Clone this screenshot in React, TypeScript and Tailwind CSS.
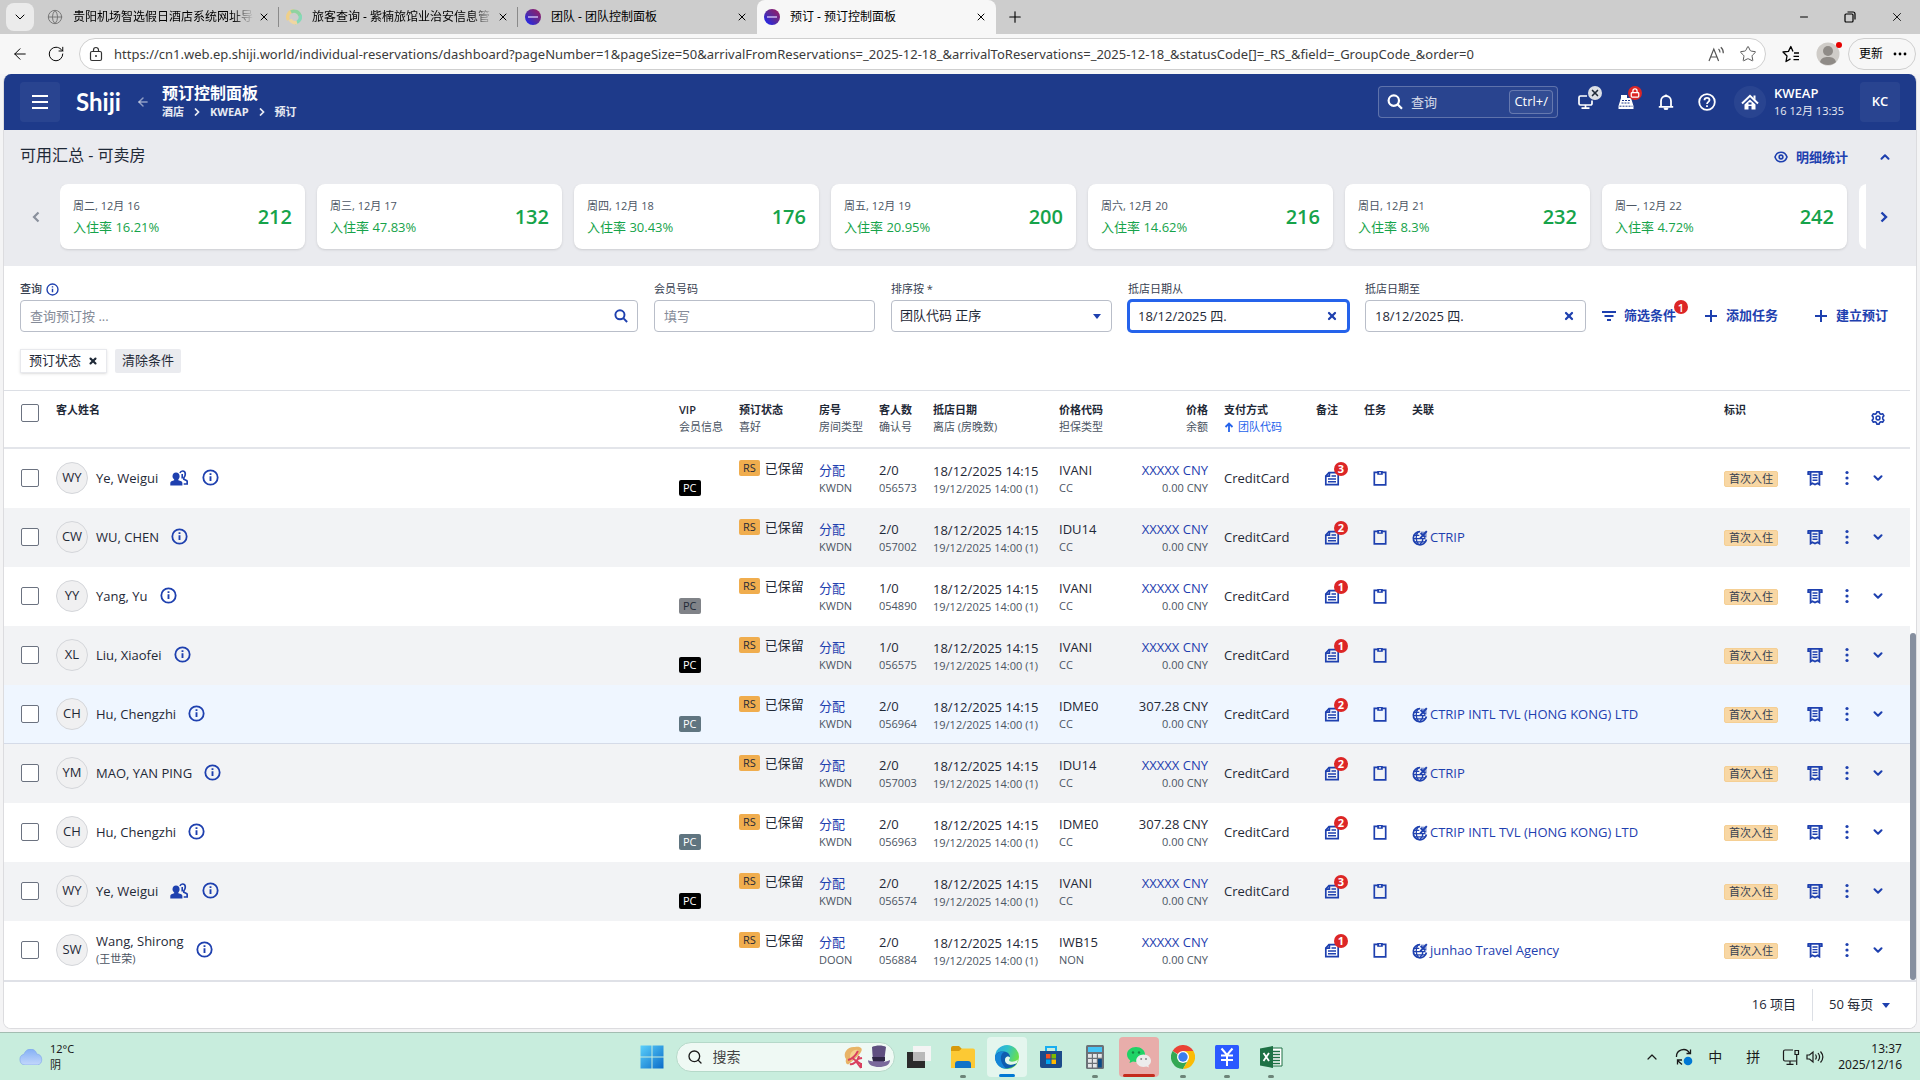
import React, { useState } from 'react';
import { ArrowLeft, ChevronDown, ChevronUp, Globe, Lock, Minus, Plus, RotateCw, Search, Star, X } from 'lucide-react';

interface DayStat {
  day: string;
  rate: string;
  rooms: number;
}

interface Reservation {
  initials: string;
  name: string;
  altName?: string;
  shared?: boolean;
  pc?: 'black' | 'gray' | 'slate';
  room: string;
  guests: string;
  conf: string;
  rate: string;
  guarantee: string;
  price: string;
  payment: string;
  notes: number;
  link?: string;
  highlight?: boolean;
}

const days: DayStat[] = [
  { day: '周二, 12月 16', rate: '16.21%', rooms: 212 },
  { day: '周三, 12月 17', rate: '47.83%', rooms: 132 },
  { day: '周四, 12月 18', rate: '30.43%', rooms: 176 },
  { day: '周五, 12月 19', rate: '20.95%', rooms: 200 },
  { day: '周六, 12月 20', rate: '14.62%', rooms: 216 },
  { day: '周日, 12月 21', rate: '8.3%', rooms: 232 },
  { day: '周一, 12月 22', rate: '4.72%', rooms: 242 },
];

const reservations: Reservation[] = [
  { initials: 'WY', name: 'Ye, Weigui', shared: true, pc: 'black', room: 'KWDN', guests: '2/0', conf: '056573', rate: 'IVANI', guarantee: 'CC', price: 'XXXXX', payment: 'CreditCard', notes: 3 },
  { initials: 'CW', name: 'WU, CHEN', room: 'KWDN', guests: '2/0', conf: '057002', rate: 'IDU14', guarantee: 'CC', price: 'XXXXX', payment: 'CreditCard', notes: 2, link: 'CTRIP' },
  { initials: 'YY', name: 'Yang, Yu', pc: 'gray', room: 'KWDN', guests: '1/0', conf: '054890', rate: 'IVANI', guarantee: 'CC', price: 'XXXXX', payment: 'CreditCard', notes: 1 },
  { initials: 'XL', name: 'Liu, Xiaofei', pc: 'black', room: 'KWDN', guests: '1/0', conf: '056575', rate: 'IVANI', guarantee: 'CC', price: 'XXXXX', payment: 'CreditCard', notes: 1 },
  { initials: 'CH', name: 'Hu, Chengzhi', pc: 'slate', room: 'KWDN', guests: '2/0', conf: '056964', rate: 'IDME0', guarantee: 'CC', price: '307.28', payment: 'CreditCard', notes: 2, link: 'CTRIP INTL TVL (HONG KONG) LTD', highlight: true },
  { initials: 'YM', name: 'MAO, YAN PING', room: 'KWDN', guests: '2/0', conf: '057003', rate: 'IDU14', guarantee: 'CC', price: 'XXXXX', payment: 'CreditCard', notes: 2, link: 'CTRIP' },
  { initials: 'CH', name: 'Hu, Chengzhi', pc: 'slate', room: 'KWDN', guests: '2/0', conf: '056963', rate: 'IDME0', guarantee: 'CC', price: '307.28', payment: 'CreditCard', notes: 2, link: 'CTRIP INTL TVL (HONG KONG) LTD' },
  { initials: 'WY', name: 'Ye, Weigui', shared: true, pc: 'black', room: 'KWDN', guests: '2/0', conf: '056574', rate: 'IVANI', guarantee: 'CC', price: 'XXXXX', payment: 'CreditCard', notes: 3 },
  { initials: 'SW', name: 'Wang, Shirong', altName: '(王世荣)', room: 'DOON', guests: '2/0', conf: '056884', rate: 'IWB15', guarantee: 'NON', price: 'XXXXX', payment: '', notes: 1, link: 'junhao Travel Agency' },
];

const pcStyles = {
  black: 'bg-black text-white',
  gray: 'bg-[#808388] text-[#1f2937]',
  slate: 'bg-[#607580] text-white',
};

/* ---------- icons ---------- */

const InfoIcon = ({ className }: { className?: string }) => (
  <svg viewBox="0 0 18 18" className={className} fill="none" stroke="currentColor" strokeWidth="1.9">
    <circle cx="9" cy="9" r="7.6" />
    <path d="M9 7.8v5M9 4.6v1.8" strokeWidth="2" />
  </svg>
);

const SearchIcon = ({ className }: { className?: string }) => (
  <svg viewBox="0 0 16 16" className={className} fill="none" stroke="currentColor" strokeWidth="2.2">
    <circle cx="6.8" cy="6.6" r="5.2" />
    <path d="M10.6 10.4L15 14.8" />
  </svg>
);

const GroupIcon = () => (
  <svg viewBox="0 0 18 16" className="h-4 w-[18px]">
    <path d="M6 2.500c2.200 0 3.600 1.600 3.600 3.800 0 1.400-.5 2.400-1.300 3.100v.8l3 1.100c.7.3 1.100.9 1.100 1.600V15.500H.3v-2.600c0-.7.4-1.300 1.100-1.600l2.800-1.100v-.8C3.200 8.700 2.500 7.700 2.500 6.300 2.500 4.100 3.900 2.500 6 2.500z" fill="currentColor" />
    <path d="M10 3C10.500 1.700 11.400 1 12.600 1c1.700 0 2.700 1.300 2.700 3.100 0 1.600-.6 2.900-1.500 3.700v1.500l2.700 1.300c.5.3.7.6.7 1.100v2.300h-3.500" fill="none" stroke="currentColor" strokeWidth="1.700" />
    <path d="M12.200 4v4.500" stroke="currentColor" strokeWidth="1.600" />
  </svg>
);

const NotesIcon = () => (
  <svg viewBox="0 0 16 16" className="h-4 w-4" fill="none" stroke="currentColor" strokeWidth="1.700">
    <path d="M5 2.600h9.200v12H1.800V6z" />
    <path d="M5.400 2.600v3.600H1.800" />
    <path d="M7.500 6h4.500M4 8.900h8M4 11.700h8" strokeWidth="1.500" />
  </svg>
);

const TaskIcon = () => (
  <svg viewBox="0 0 14 16" className="h-4 w-3.5" fill="none" stroke="currentColor" strokeWidth="1.700">
    <path d="M1.300 2.300h11.400v12.600H1.300z" />
    <path d="M4.200 1h5.600v3.800H4.200z" fill="currentColor" stroke="none" />
    <path d="M6 2.800h2" stroke="#fff" strokeWidth="1.200" />
  </svg>
);

const AgencyIcon = () => (
  <svg viewBox="0 0 16 16" className="h-4 w-4 shrink-0" fill="none" stroke="currentColor">
    <path d="M8 1.600A6.600 6.600 0 1 0 14.400 9.500" strokeWidth="1.700" />
    <path d="M6 2C3.500 5 3.500 11 6.500 14.400M7.500 14.500c2.500-1.500 3.300-3.400 3.300-5.500M1.300 5.400h6M1 8.600h12.500M2 11.800h11" strokeWidth="1.300" />
    <path d="M8.200 8.400L14.800 1.200M8.500 3l5 4.500" strokeWidth="1.900" />
    <path d="M8 1.500l6.500.2.200 6z" fill="currentColor" fillOpacity=".55" stroke="none" />
  </svg>
);

const BillIcon = () => (
  <svg viewBox="0 0 16 16" className="h-4 w-4" fill="none" stroke="currentColor" strokeWidth="1.800">
    <path d="M.5 1.800h15M3.600 2v12.500l1.800-1.300L8 14.600l2.600-1.400 1.800 1.300V2M1.200 1.800v2.400h2M14.800 1.800v2.400h-2" />
    <path d="M5.500 5h5M5.500 7.600h5M5.500 10.200h5" strokeWidth="1.400" />
  </svg>
);

const DotsIcon = () => (
  <svg viewBox="0 0 4 16" className="h-4 w-1" fill="currentColor">
    <circle cx="2" cy="2.500" r="1.600" />
    <circle cx="2" cy="8" r="1.600" />
    <circle cx="2" cy="13.500" r="1.600" />
  </svg>
);

const Caret = () => (
  <svg viewBox="0 0 8 5" className="h-[5px] w-2" fill="currentColor">
    <path d="M0 0h8L4 5z" />
  </svg>
);

const GearIcon = () => (
  <svg viewBox="0 0 16 16" className="h-3.5 w-3.5" fill="none" stroke="currentColor" strokeWidth="1.800">
    <path d="M6.600 1h2.800l.5 1.900 1.500.8 1.900-.6 1.500 2.400-1.400 1.500v2l1.400 1.500-1.500 2.400-1.900-.6-1.500.8-.5 1.900H6.600l-.5-1.900-1.500-.8-1.900.6-1.500-2.400L2.600 9V7L1.200 5.500l1.500-2.400 1.900.6 1.500-.8z" strokeLinejoin="round" />
    <circle cx="8" cy="8" r="2.200" />
  </svg>
);

const AppLogo = () => (
  <svg viewBox="0 0 16 16" className="h-4 w-4 shrink-0">
    <defs>
      <linearGradient id="appLogo" x1="1" y1="0" x2="0" y2="1">
        <stop offset="0" stopColor="#a3195b" />
        <stop offset="0.500" stopColor="#5a2a9a" />
        <stop offset="1" stopColor="#1226ff" />
      </linearGradient>
    </defs>
    <circle cx="8" cy="8" r="8" fill="url(#appLogo)" />
    <path d="M3 8h10" stroke="#c9b8f0" strokeWidth="1.500" />
  </svg>
);

const SwirlLogo = () => (
  <svg viewBox="0 0 16 16" className="h-4 w-4 shrink-0" fill="none" strokeWidth="3.400">
    <path d="M2.500 11a6 6 0 0 1 5.500-9" stroke="#efd08a" />
    <path d="M5 3a6 6 0 0 1 9 4" stroke="#8fd3a0" />
    <path d="M14 6a6 6 0 0 1-5 8" stroke="#86d9b8" />
    <path d="M11 13.500a6 6 0 0 1-7-3" stroke="#f0d6a0" />
  </svg>
);

/* ---------- browser chrome ---------- */

const tabs = [
  { title: '贵阳机场智选假日酒店系统网址导', icon: <Globe className="w-4 h-4 shrink-0 text-[#777]" strokeWidth={1.5} />, active: false },
  { title: '旅客查询 - 紫楠旅馆业治安信息管', icon: <SwirlLogo />, active: false },
  { title: '团队 - 团队控制面板', icon: <AppLogo />, active: false },
  { title: '预订 - 预订控制面板', icon: <AppLogo />, active: true },
];

const BrowserChrome: React.FC = () => (
  <div className="font-['Noto_Sans','Noto_Sans_CJK_SC',sans-serif] text-black">
    <div className="flex h-[34px] items-center bg-[#cdcdcd] pl-1.5">
      <button aria-label="标签页操作" className="flex h-7 w-7 items-center justify-center rounded-lg bg-[#ebebeb]">
        <ChevronDown className="w-4 h-4" strokeWidth={1.5} />
      </button>
      <div className="ml-1.5 flex h-full">
        {tabs.map((tab, i) => (
          <div key={tab.title} className={`flex h-full w-[239px] items-center pl-[7px] ${tab.active ? 'rounded-t-lg bg-[#f7f7f7]' : ''}`}>
            {tab.icon}
            <span className={`ml-2.5 flex-1 whitespace-nowrap text-xs leading-5 ${i < 2 ? '[mask-image:linear-gradient(to_right,black_88%,transparent)]' : ''}`}>{tab.title}</span>
            <button aria-label="关闭标签页" className="ml-1"><X className="w-3 h-3" strokeWidth={2} /></button>
            <span className={`ml-2 h-5 w-px ${i < 2 ? 'bg-[#8a8a8a]' : ''}`} />
          </div>
        ))}
      </div>
      <button aria-label="新建标签页" className="ml-2.5"><Plus className="w-[18px] h-[18px]" strokeWidth={1.5} /></button>
      <div className="ml-auto flex items-center gap-[34px] pr-4">
        <button aria-label="最小化"><Minus className="w-3 h-3" strokeWidth={2} /></button>
        <button aria-label="还原">
          <svg viewBox="0 0 12 12" className="h-3 w-3" fill="none" stroke="black" strokeWidth="1.200">
            <rect x="1" y="3" width="8" height="8" rx="1" />
            <path d="M3.500 1h5.500a2 2 0 0 1 2 2v5.500" />
          </svg>
        </button>
        <button aria-label="关闭"><X className="w-3.5 h-3.5" strokeWidth={1.5} /></button>
      </div>
    </div>

    <div className="flex h-10 items-center bg-[#f7f7f7] pl-[11px]">
      <button aria-label="返回"><ArrowLeft className="w-[18px] h-[18px]" strokeWidth={1.3} /></button>
      <button aria-label="刷新" className="ml-[18px]"><RotateCw className="w-[18px] h-[18px]" strokeWidth={1.3} /></button>
      <div className="ml-3.5 flex h-8 flex-1 items-center rounded-full border border-[#cfcfcf] bg-white pl-2 pr-2">
        <svg viewBox="0 0 16 16" className="h-4 w-4 shrink-0" fill="none" stroke="#333" strokeWidth="1.200">
          <rect x="2.500" y="5.500" width="11" height="9" rx="1.500" />
          <path d="M5.500 5.500V4a2.500 2.500 0 0 1 5 0v1.500" />
          <circle cx="8" cy="10" r="1" fill="#333" stroke="none" />
        </svg>
        <input
          aria-label="地址"
          className="ml-2.5 min-w-0 flex-1 bg-transparent text-[13px] leading-5 text-[#3b3b3b] outline-none"
          defaultValue="https://cn1.web.ep.shiji.world/individual-reservations/dashboard?pageNumber=1&pageSize=50&arrivalFromReservations=_2025-12-18_&arrivalToReservations=_2025-12-18_&statusCode[]=_RS_&field=_GroupCode_&order=0"
        />
        <button aria-label="大声朗读" className="mr-3.5">
          <svg viewBox="0 0 17 16" className="h-4 w-[17px]" fill="none" stroke="#555" strokeWidth="1.200">
            <path d="M1 15L5.800 3l4.800 12M2.800 11h6M10.500 3c1 .8 1.500 2 1.500 3.500M12.800 1.200c1.800 1.500 2.600 3.500 2.500 6" />
          </svg>
        </button>
        <button aria-label="收藏"><Star className="w-[18px] h-[18px] text-[#555]" strokeWidth={1.3} /></button>
      </div>
      <button aria-label="收藏夹" className="ml-4">
        <svg viewBox="0 0 18 18" className="h-[18px] w-[18px]" fill="none" stroke="black" strokeWidth="1.300" strokeLinejoin="round">
          <path d="M11 6.500L8.800 1.500 6.500 6.400 1 7l4 4-1 5.500 4.500-2.600M12 8h5M11.500 11.300H17M11.500 14.600H17" />
        </svg>
      </button>
      <button aria-label="个人资料" className="relative ml-4">
        <svg viewBox="0 0 24 24" className="h-6 w-6">
          <circle cx="12" cy="12" r="11.500" fill="#cfccc8" />
          <circle cx="12" cy="9" r="5" fill="#8f8b87" />
          <path d="M4 20c1-4 4-5 8-5s7 1 8 5c-4 4-12 4-16 0z" fill="#8f8b87" />
        </svg>
        <span className="absolute -right-0.5 top-0 h-1.5 w-1.5 rounded-full bg-[#e60000]" />
      </button>
      <button className="ml-2 mr-1 flex h-8 items-center gap-2.5 rounded-full border border-[#cfcfcf] pl-2.5 pr-2 text-xs">
        更新
        <svg viewBox="0 0 14 4" className="h-1 w-3.5">
          <circle cx="2" cy="2" r="1.400" /><circle cx="7" cy="2" r="1.400" /><circle cx="12" cy="2" r="1.400" />
        </svg>
      </button>
    </div>
  </div>
);

/* ---------- application ---------- */

const Header: React.FC = () => (
  <header className="flex h-14 items-center bg-[#1e3a8a] px-4 text-white">
    <button aria-label="菜单" className="flex h-10 w-10 items-center justify-center rounded bg-white/5">
      <svg viewBox="0 0 16 14" className="h-3.5 w-4" stroke="white" strokeWidth="2"><path d="M0 1h16M0 7h16M0 13h16" /></svg>
    </button>
    <a href="#home" className="ml-4 w-11 font-['Lato','Open_Sans',sans-serif] text-2xl font-bold leading-8">Shiji</a>
    <button aria-label="返回" className="ml-4 text-white/50"><ArrowLeft className="w-3.5 h-3.5" strokeWidth={2.5} /></button>
    <div className="ml-3">
      <h1 className="text-base font-bold leading-5">预订控制面板</h1>
      <nav className="flex items-center gap-2.5 text-[11px] font-bold leading-[18px] text-white/90">
        <a href="#hotel">酒店</a>
        <svg viewBox="0 0 6 8" className="h-2 w-1.5" fill="none" stroke="currentColor" strokeWidth="1.700"><path d="M1 .5L4.500 4 1 7.500" /></svg>
        <a href="#kweap">KWEAP</a>
        <svg viewBox="0 0 6 8" className="h-2 w-1.5" fill="none" stroke="currentColor" strokeWidth="1.700"><path d="M1 .5L4.500 4 1 7.500" /></svg>
        <a href="#reservations">预订</a>
      </nav>
    </div>

    <div className="ml-auto flex h-8 w-[180px] items-center rounded border border-white/25 bg-white/5 pl-2 pr-1">
      <SearchIcon className="h-4 w-4 shrink-0" />
      <input aria-label="查询" placeholder="查询" className="ml-2 w-0 flex-1 bg-transparent text-[13px] leading-5 outline-none placeholder:text-white/80" />
      <kbd className="flex h-6 items-center rounded border border-white/25 bg-white/5 px-1 font-[inherit] text-[13px]">Ctrl+/</kbd>
    </div>
    <div className="ml-5 flex items-center gap-6">
      <button aria-label="设备" className="relative">
        <svg viewBox="0 0 16 16" className="h-4 w-4" fill="none" stroke="white" strokeWidth="1.700">
          <path d="M9 2H2.500A1.500 1.500 0 0 0 1 3.500v6A1.500 1.500 0 0 0 2.500 11h10A1.500 1.500 0 0 0 14 9.500V6.500M7.500 11v3M3.500 14.200h8" />
        </svg>
        <span className="absolute -right-2 -top-2 flex h-3.5 w-3.5 items-center justify-center rounded-full bg-[#dcdfe6]">
          <X className="w-2.5 h-2.5 text-[#1f2937]" strokeWidth={4} />
        </span>
      </button>
      <button aria-label="收银" className="relative">
        <svg viewBox="0 0 16 16" className="h-4 w-4">
          <path d="M3 1h6v3h4l2.500 8v3H.5v-3L3 4z" fill="white" />
          <path d="M4 6.500h8M3.500 9h9M1.500 12.200h13" stroke="#1e3a8a" strokeWidth="1" strokeDasharray="2 1" />
        </svg>
        <span className="absolute -right-2 -top-2 flex h-3.5 w-3.5 items-center justify-center rounded-full bg-[#dc2626]">
          <Lock className="w-2.5 h-2.5" strokeWidth={3} />
        </span>
      </button>
      <button aria-label="通知">
        <svg viewBox="0 0 16 16" className="h-4 w-4" fill="none" stroke="white" strokeWidth="1.800">
          <path d="M.8 12.800h14.400M3 12.500V7a5 5 0 0 1 10 0v5.500" />
          <path d="M6 14h4a2 2 0 0 1-4 0zM7 1h2v1H7z" fill="white" stroke="white" strokeWidth=".8" />
        </svg>
      </button>
      <button aria-label="帮助">
        <svg viewBox="0 0 18 18" className="h-[18px] w-[18px]" fill="none" stroke="white" strokeWidth="1.800">
          <circle cx="9" cy="9" r="7.800" />
          <path d="M6.500 7.200C6.500 5.700 7.500 4.900 9 4.900s2.500.9 2.500 2.200c0 1.700-2.500 1.900-2.500 4M9 12.200v1.800" />
        </svg>
      </button>
    </div>
    <div className="ml-[18px] flex h-8 w-8 items-center justify-center rounded-full bg-white/5">
      <svg viewBox="0 0 18 16" className="h-4 w-[18px]">
        <path d="M1 9.500L9 1.800l8 7.700" fill="none" stroke="white" strokeWidth="2" />
        <path d="M3.500 10.500L9 5.500l5.500 5v5h-4V12h-3v3.500h-4zM12.500 1.500h2V6l-2-2z" fill="white" />
        <path d="M7.500 8.500h3v2h-3z" fill="#1e3a8a" />
      </svg>
    </div>
    <div className="ml-2 w-[86px] leading-[18px]">
      <p className="text-[13px] font-semibold">KWEAP</p>
      <p className="text-[11px] text-white/90">16 12月 13:35</p>
    </div>
    <button className="flex h-10 w-10 items-center justify-center rounded bg-white/5 text-[13px] font-semibold">KC</button>
  </header>
);

const StatCard: React.FC<{ stat: DayStat }> = ({ stat }) => (
  <div className="flex h-[65px] w-[245px] shrink-0 items-center justify-between rounded-lg bg-white px-[13px] shadow-sm">
    <div>
      <p className="text-[11px] leading-5 text-[#4b5563]">{stat.day}</p>
      <p className="text-[13px] leading-[22px] text-[#16a34a]">入住率 {stat.rate}</p>
    </div>
    <span className="text-[20px] font-semibold text-[#16a34a]">{stat.rooms}</span>
  </div>
);

const Summary: React.FC = () => (
  <section className="h-[136px] bg-[#eaebef] pt-[13px]">
    <div className="flex items-center pl-4 pr-6 text-[#1e40af]">
      <h2 className="text-base leading-6 text-[#1f2937]">可用汇总 - 可卖房</h2>
      <button className="ml-auto flex items-center gap-2 pt-1 text-[13px] font-semibold leading-5">
        <svg viewBox="0 0 14 12" className="h-3 w-3.5" fill="none" stroke="currentColor" strokeWidth="1.600">
          <path d="M1 6c1-3 3.500-4.800 6-4.800S12 3 13 6c-1 3-3.500 4.800-6 4.800S2 9 1 6z" />
          <circle cx="7" cy="6" r="1.900" />
        </svg>
        明细统计
      </button>
      <button aria-label="收起" className="ml-[30px] pt-1"><ChevronUp className="w-3.5 h-3.5" strokeWidth={3.5} /></button>
    </div>
    <div className="mt-[17px] flex items-center">
      <button aria-label="上一页" className="flex w-14 justify-center pb-1 pl-2 text-[#8a909c]">
        <svg viewBox="0 0 8 12" className="h-3 w-2" fill="none" stroke="currentColor" strokeWidth="2.200"><path d="M6.500 1.500L2 6l4.500 4.500" /></svg>
      </button>
      <div className="flex flex-1 gap-3 overflow-hidden pb-1">
        {days.map(d => <StatCard key={d.day} stat={d} />)}
        <div className="h-[65px] w-[245px] shrink-0 rounded-lg bg-white" />
      </div>
      <button aria-label="下一页" className="flex w-[50px] justify-center pb-1 pr-3.5 text-[#1e40af]">
        <svg viewBox="0 0 8 12" className="h-3 w-2" fill="none" stroke="currentColor" strokeWidth="2.400"><path d="M1.500 1.500L6 6l-4.500 4.500" /></svg>
      </button>
    </div>
  </section>
);

const DateField: React.FC<{ id: string; label: string; focused?: boolean }> = ({ id, label, focused }) => {
  const [value, setValue] = useState('18/12/2025 四.');
  return (
    <div className="w-[221px]">
      <label htmlFor={id} className="block text-[11px] leading-[22px] text-[#374151]">{label}</label>
      <div className={`flex h-8 items-center rounded bg-white ${focused ? 'border-2 border-[#2563eb] pl-2 pr-[9px] ring-1 ring-[#2563eb]' : 'border border-[#b9bec9] pl-[9px] pr-2.5'}`}>
        <input id={id} value={value} onChange={e => setValue(e.target.value)} className="w-0 flex-1 bg-transparent text-[13px] leading-5 outline-none" />
        <button aria-label="清除" onClick={() => setValue('')} className="text-[#1e40af]"><X className="w-3 h-3" strokeWidth={4.5} /></button>
      </div>
    </div>
  );
};

const Filters: React.FC = () => (
  <section className="h-[124px] bg-white pl-4 pr-7 pt-3">
    <div className="flex items-end gap-4">
      <div className="min-w-0 flex-1">
        <label htmlFor="query" className="flex items-center gap-1 text-[11px] font-medium leading-[22px] text-[#374151]">
          查询 <InfoIcon className="h-[13px] w-[13px] text-[#1e40af]" />
        </label>
        <div className="flex h-8 items-center rounded border border-[#b9bec9] pl-[9px] pr-[9px]">
          <input id="query" placeholder="查询预订按 ..." className="w-0 flex-1 bg-transparent text-[13px] leading-5 outline-none placeholder:text-[#858b98]" />
          <button aria-label="搜索" className="text-[#1e40af]"><SearchIcon className="h-3.5 w-3.5" /></button>
        </div>
      </div>
      <div className="w-[221px]">
        <label htmlFor="member" className="block text-[11px] leading-[22px] text-[#374151]">会员号码</label>
        <input id="member" placeholder="填写" className="h-8 w-full rounded border border-[#b9bec9] px-[9px] text-[13px] outline-none placeholder:text-[#858b98]" />
      </div>
      <div className="w-[221px]">
        <label htmlFor="sort" className="block text-[11px] leading-[22px] text-[#374151]">排序按 *</label>
        <div className="flex h-8 items-center rounded border border-[#b9bec9] pl-2 pr-2.5 text-[#1e40af]">
          <select id="sort" className="w-0 flex-1 appearance-none bg-transparent text-[13px] text-[#1f2937] outline-none">
            <option>团队代码 正序</option>
          </select>
          <Caret />
        </div>
      </div>
      <DateField id="from" label="抵店日期从" focused />
      <DateField id="to" label="抵店日期至" />
      <div className="flex h-8 items-center text-[13px] font-semibold text-[#1e40af]">
        <button className="relative flex items-center gap-2">
          <svg viewBox="0 0 14 10" className="h-2.5 w-3.5" stroke="currentColor" strokeWidth="1.800"><path d="M0 1h14M2.500 5h9M5 9h4" /></svg>
          筛选条件
          <span className="absolute -right-3 -top-1.5 flex h-3.5 w-3.5 items-center justify-center rounded-full bg-[#dc2626] text-[11px] leading-none text-white">1</span>
        </button>
        <button className="ml-7 flex items-center gap-2">
          <svg viewBox="0 0 14 14" className="h-3.5 w-3.5" stroke="currentColor" strokeWidth="2"><path d="M7 1v12M1 7h12" /></svg>
          添加任务
        </button>
        <button className="ml-9 flex items-center gap-2">
          <svg viewBox="0 0 14 14" className="h-3.5 w-3.5" stroke="currentColor" strokeWidth="2"><path d="M7 1v12M1 7h12" /></svg>
          建立预订
        </button>
      </div>
    </div>
    <div className="mt-[17px] flex items-center gap-2 text-[13px]">
      <span className="flex h-6 items-center gap-[7px] border border-[#e8e9ed] px-2 shadow-sm">
        预订状态
        <button aria-label="移除"><X className="w-2.5 h-2.5" strokeWidth={5} /></button>
      </span>
      <button className="h-6 rounded-xs bg-[#eaebef] px-[7px]">清除条件</button>
    </div>
  </section>
);

const checkboxStyle = "block h-[18px] w-[18px] appearance-none rounded-xs border border-[#6b7280] bg-white checked:bg-[#1e40af]";

const HeaderCell: React.FC<{ top: string; bottom?: string }> = ({ top, bottom }) => (
  <th className="whitespace-nowrap pt-[11px] text-left align-top text-[11px] font-semibold leading-[17px]">
    {top}
    {bottom && <span className="block font-normal text-[#4b5563]">{bottom}</span>}
  </th>
);

const Pair: React.FC<{ top: React.ReactNode; bottom: string }> = ({ top, bottom }) => (
  <>
    <div className="text-[13px] leading-5">{top}</div>
    <div className="text-[11px] leading-4 text-[#4b5563]">{bottom}</div>
  </>
);

const ReservationRow: React.FC<{ r: Reservation; index: number }> = ({ r, index }) => (
  <tr className={`h-[59px] whitespace-nowrap ${r.highlight ? 'bg-[#eff6ff] shadow-[inset_0_-1px_0_#d5dbe8]' : index % 2 ? 'bg-[#f2f3f5]' : 'bg-white'}`}>
    <td className="pb-0.5 pl-[17px]"><input type="checkbox" aria-label={r.name} className={checkboxStyle} /></td>
    <td className="pb-0.5">
      <div className="flex items-center">
        <span className="flex h-8 w-8 items-center justify-center rounded-full border border-[#d4d6da] bg-[#f0f0f1] text-[13px]">{r.initials}</span>
        <div className="ml-2 mr-3">
          <div className="text-[13px] leading-[18px]">{r.name}</div>
          {r.altName && <div className="text-[11px] leading-[18px] text-[#4b5563]">{r.altName}</div>}
        </div>
        <div className="flex items-center gap-3.5 text-[#1e40af]">
          {r.shared && <GroupIcon />}
          <button aria-label="客人信息"><InfoIcon className="h-[17px] w-[17px]" /></button>
        </div>
      </div>
    </td>
    <td className="pb-0.5">
      <div className="flex h-9 items-end">
        {r.pc && <span className={`h-4 rounded-xs px-1 text-[11px] leading-4 ${pcStyles[r.pc]}`}>PC</span>}
      </div>
    </td>
    <td className="pb-0.5">
      <div className="flex h-9 items-start gap-[5px]">
        <span className="h-4 rounded-xs bg-[#f0ad4e] px-1 text-[11px] leading-4">RS</span>
        <span className="text-[13px] leading-4">已保留</span>
      </div>
    </td>
    <td className="pb-0.5"><Pair top={<a href="#assign" className="text-[#1e40af]">分配</a>} bottom={r.room} /></td>
    <td className="pb-0.5"><Pair top={r.guests} bottom={r.conf} /></td>
    <td><Pair top="18/12/2025 14:15" bottom="19/12/2025 14:00 (1)" /></td>
    <td className="pb-0.5"><Pair top={r.rate} bottom={r.guarantee} /></td>
    <td className="pb-0.5 pr-4 text-right">
      <Pair top={r.price === 'XXXXX' ? <a href="#price" className="text-[#1e40af]">XXXXX CNY</a> : `${r.price} CNY`} bottom="0.00 CNY" />
    </td>
    <td className="text-[13px]">{r.payment}</td>
    <td className="pb-0.5 pl-2 text-[#1e40af]">
      <button aria-label="备注" className="relative block">
        <NotesIcon />
        <span className="absolute -right-2 -top-2 flex h-3.5 w-3.5 items-center justify-center rounded-full bg-[#dc2626] text-[11px] font-bold leading-none text-white">{r.notes}</span>
      </button>
    </td>
    <td className="pb-0.5 pl-[9px] text-[#1e40af]"><button aria-label="任务" className="block"><TaskIcon /></button></td>
    <td className="text-[#1e40af]">
      {r.link && <a href="#profile" className="flex items-center gap-0.5 text-[13px]"><AgencyIcon />{r.link}</a>}
    </td>
    <td><span className="block h-4 w-[54px] rounded-xs border border-[#f5cf94] bg-[#f8d7a4] text-center text-[11px] leading-[14px] text-[#374151]">首次入住</span></td>
    <td className="pb-0.5">
      <div className="flex items-center justify-end gap-[22px] pr-[25px] text-[#1e40af]">
        <button aria-label="账单"><BillIcon /></button>
        <button aria-label="更多"><DotsIcon /></button>
        <button aria-label="展开"><ChevronDown className="w-3.5 h-3.5" strokeWidth={3.5} /></button>
      </div>
    </td>
  </tr>
);

const ReservationTable: React.FC = () => (
  <div className="flex bg-white">
    <table className="w-full flex-1 table-fixed border-collapse">
      <colgroup>
        <col className="w-[52px]" />
        <col />
        <col className="w-[60px]" />
        <col className="w-[80px]" />
        <col className="w-[60px]" />
        <col className="w-[54px]" />
        <col className="w-[126px]" />
        <col className="w-[72px]" />
        <col className="w-[93px]" />
        <col className="w-[92px]" />
        <col className="w-[48px]" />
        <col className="w-[48px]" />
        <col className="w-[312px]" />
        <col className="w-[80px]" />
        <col className="w-[106px]" />
      </colgroup>
      <thead>
        <tr className="h-[59px] shadow-[inset_0_1px_0_#dcdfe5,inset_0_-2px_0_#e3e5ea]">
          <th className="pb-3.5 pl-[17px]"><input type="checkbox" aria-label="全选" className={checkboxStyle} /></th>
          <HeaderCell top="客人姓名" />
          <HeaderCell top="VIP" bottom="会员信息" />
          <HeaderCell top="预订状态" bottom="喜好" />
          <HeaderCell top="房号" bottom="房间类型" />
          <HeaderCell top="客人数" bottom="确认号" />
          <HeaderCell top="抵店日期" bottom="离店 (房晚数)" />
          <HeaderCell top="价格代码" bottom="担保类型" />
          <th className="pr-4 pt-[11px] text-right align-top text-[11px] font-semibold leading-[17px]">
            价格<span className="block font-normal text-[#4b5563]">余额</span>
          </th>
          <th className="whitespace-nowrap pt-[11px] text-left align-top text-[11px] font-semibold leading-[17px]">
            支付方式
            <span className="flex items-center gap-1 font-normal text-[#2563eb]">
              <svg viewBox="0 0 10 10" className="h-2.5 w-2.5" fill="none" stroke="currentColor" strokeWidth="1.800"><path d="M5 10V1.500M1.500 5L5 1.500 8.500 5" /></svg>
              团队代码
            </span>
          </th>
          <HeaderCell top="备注" />
          <HeaderCell top="任务" />
          <HeaderCell top="关联" />
          <HeaderCell top="标识" />
          <th className="pb-1 pr-[25px]">
            <button aria-label="设置" className="ml-auto block text-[#1e40af]"><GearIcon /></button>
          </th>
        </tr>
      </thead>
      <tbody>
        {reservations.map((r, i) => <ReservationRow key={r.conf} r={r} index={i} />)}
      </tbody>
    </table>
    <div className="flex w-1.5 flex-col justify-end">
      <div className="h-[347px] rounded-full bg-[#868f9f]" />
    </div>
  </div>
);

const Footer: React.FC = () => (
  <footer className="flex h-12 items-center justify-end border-t-2 border-[#dfe1e7] bg-white pr-[26px] text-[13px]">
    <span>16 项目</span>
    <span className="ml-4 h-8 w-px bg-[#dcdfe5]" />
    <label className="ml-4 flex items-center gap-2 text-[#1e40af]">
      <select aria-label="每页数量" className="appearance-none bg-transparent text-[#1f2937] outline-none">
        <option>50 每页</option>
      </select>
      <Caret />
    </label>
  </footer>
);

/* ---------- taskbar ---------- */

const taskApps = [
  {
    name: '任务视图', mark: '',
    icon: (
      <svg viewBox="0 0 24 24" className="h-6 w-6">
        <path d="M0 7h18v16H0z" fill="#2b2b2b" /><path d="M6 1h18v15H6z" fill="#f4f4f4" /><path d="M6 7h12v9H6z" fill="#b9b9b9" />
      </svg>
    ),
  },
  {
    name: '文件资源管理器', mark: 'dot',
    icon: (
      <svg viewBox="0 0 24 24" className="h-6 w-6">
        <path d="M0 3a2 2 0 0 1 2-2h6l3 3-3 4H0z" fill="#d79a0b" /><path d="M0 6h8l3-2.500h11a2 2 0 0 1 2 2V23H0z" fill="#fcc934" /><path d="M4 23v-4a3 3 0 0 1 3-3h10a3 3 0 0 1 3 3v4z" fill="#1173c7" />
      </svg>
    ),
  },
  {
    name: 'Edge', mark: 'active',
    icon: (
      <svg viewBox="0 0 24 24" className="h-6 w-6">
        <defs>
          <linearGradient id="edgeTop" x1="0" y1="0" x2="1" y2="0.400">
            <stop offset="0" stopColor="#2aa7e8" /><stop offset="0.500" stopColor="#2fc2c9" /><stop offset="1" stopColor="#6be04a" />
          </linearGradient>
        </defs>
        <circle cx="12" cy="12" r="12" fill="url(#edgeTop)" />
        <path d="M0 12C1 7 5 6 9 6.500c4 .5 6 3 6 6-2-2-5-.5-5 2.500 0 4 5 6.500 12 3A12 12 0 0 1 0 12z" fill="#0f5cb0" />
        <path d="M9 7C5 9 4 17 11 23.500 5 24 0 18 0 12c1-4 5-6 9-5z" fill="#1585d8" />
        <path d="M15 12.500c0 1.500-1 1.500-1 2.500 0 2 5 2.500 9-.5l-1 3.500c-7 3.500-12 1-12-3 0-3 3-4.500 5-2.500z" fill="#e4f6ee" />
      </svg>
    ),
  },
  {
    name: 'Microsoft Store', mark: '',
    icon: (
      <svg viewBox="0 0 24 24" className="h-6 w-6">
        <path d="M7 7V2h10v5" fill="none" stroke="#19aef0" strokeWidth="2" /><path d="M1 6h22v15a2 2 0 0 1-2 2H3a2 2 0 0 1-2-2z" fill="#1b4b8a" />
        <path d="M7 9h4.500v4.500H7z" fill="#f25022" /><path d="M12.500 9H17v4.500h-4.500z" fill="#7fba00" /><path d="M7 14.500h4.500V19H7z" fill="#00a4ef" /><path d="M12.500 14.500H17V19h-4.500z" fill="#ffb900" />
      </svg>
    ),
  },
  {
    name: '计算器', mark: 'dot',
    icon: (
      <svg viewBox="0 0 24 24" className="h-6 w-6">
        <rect x="3" y="0" width="18" height="24" rx="1.500" fill="#6b7177" /><path d="M5 2h14v5H5z" fill="#45c4f5" />
        <path d="M5 9h3.800v3.800H5zM10 9h3.800v3.800H10zM15 9h3.800v3.800H15zM5 14h3.800v3.800H5zM10 14h3.800v3.800H10zM5 19h3.800v3.500H5zM10 19h3.800v3.500H10z" fill="#e4e6e8" /><path d="M15 14h3.800v8.500H15z" fill="#0c4a86" />
      </svg>
    ),
  },
  {
    name: '微信', mark: 'alert',
    icon: (
      <svg viewBox="0 0 24 24" className="h-6 w-6">
        <path d="M9 2c5 0 9 3.300 9 7.500S14 17 9 17c-1 0-2-.1-3-.4L2.500 18l.7-2.700C1.300 14 0 12 0 9.500 0 5.300 4 2 9 2z" fill="#1fd366" />
        <path d="M16.500 9.500c4 0 7.500 2.800 7.500 6.200 0 2-1 3.600-2.600 4.800l.5 2-2.400-1c-1 .3-2 .4-3 .4-4 0-7.300-2.800-7.300-6.200s3.300-6.200 7.300-6.200z" fill="#ececec" />
        <circle cx="6" cy="7.500" r="1.200" fill="#14853f" /><circle cx="12" cy="7.500" r="1.200" fill="#14853f" /><circle cx="14.200" cy="14" r="1" fill="#888" /><circle cx="19" cy="14" r="1" fill="#888" />
      </svg>
    ),
  },
  {
    name: 'Chrome', mark: 'dot',
    icon: (
      <svg viewBox="0 0 24 24" className="h-6 w-6">
        <path d="M12 12L1.600 6A12 12 0 0 1 22.400 6z" fill="#ea4335" /><path d="M12 12h-2L1.600 6A12 12 0 0 0 12 24l5-9z" fill="#34a853" /><path d="M12 6h10.400A12 12 0 0 1 12 24l5.200-9z" fill="#fbbc05" />
        <circle cx="12" cy="12" r="6" fill="white" /><circle cx="12" cy="12" r="4.700" fill="#3b7ded" />
      </svg>
    ),
  },
  {
    name: '记账', mark: 'dot',
    icon: (
      <svg viewBox="0 0 24 24" className="h-6 w-6">
        <rect width="24" height="24" rx="1.500" fill="#2b59ff" /><path d="M6.500 3.500L12 10l5.500-6.500M6 10.500h12M6 15h12M12 10v11" fill="none" stroke="white" strokeWidth="2" />
      </svg>
    ),
  },
  {
    name: 'Excel', mark: 'dot',
    icon: (
      <svg viewBox="0 0 24 24" className="h-6 w-6">
        <path d="M12 3h11v18H12z" fill="#fff" stroke="#1e7145" /><path d="M14 6.500h7M14 9.500h7M14 12.500h7M14 15.500h7M14 18.500h7" stroke="#1e7145" strokeWidth="1.500" />
        <path d="M1 3.500L14 1v22L1 20.500z" fill="#1e7145" /><path d="M4.500 8l5.500 8M10 8l-5.500 8" stroke="white" strokeWidth="1.800" />
      </svg>
    ),
  },
];

const Taskbar: React.FC = () => (
  <div className="grid h-12 grid-cols-[1fr_auto_1fr] items-center border-t border-[#a3bdb1] bg-[#c8eddd] font-['Noto_Sans','Noto_Sans_CJK_SC',sans-serif] text-[#1a1a1a]">
    <div className="flex items-center gap-[7px] pl-[19px] text-[11px] leading-4">
      <svg viewBox="0 0 24 16" className="h-4 w-6">
        <defs>
          <linearGradient id="cloud" x1="0" y1="0" x2="0" y2="1"><stop offset="0" stopColor="#84b0f5" /><stop offset="1" stopColor="#c3d7fb" /></linearGradient>
        </defs>
        <path d="M6 16a5.500 5.500 0 0 1-1-10.800C6 2 8.500 0 11.500 0c3.500 0 5.500 2 6.300 5A5.600 5.600 0 0 1 18.500 16z" fill="url(#cloud)" stroke="#7ea4ec" strokeWidth=".6" />
      </svg>
      <div><p>12°C</p><p>阴</p></div>
    </div>

    <div className="flex items-center gap-1 pl-0.5">
      <button aria-label="开始" className="flex h-10 w-10 items-center justify-center">
        <svg viewBox="0 0 24 24" className="h-6 w-6">
          <defs>
            <linearGradient id="win" x1="0" y1="0" x2="1" y2="1"><stop offset="0" stopColor="#5bd0fb" /><stop offset="1" stopColor="#0a6cc9" /></linearGradient>
          </defs>
          <path d="M.5.500h11v11H.5zM12.500.5h11v11h-11zM.5 12.500h11v11H.5zM12.500 12.500h11v11h-11z" fill="url(#win)" />
        </svg>
      </button>
      <div className="flex h-[30px] w-[219px] items-center rounded-full border border-[#b5d9c9] bg-[#eff9f4] pl-2.5 pr-1">
        <Search className="w-4 h-4 shrink-0" strokeWidth={2} />
        <input aria-label="搜索" placeholder="搜索" className="ml-2.5 w-0 flex-1 bg-transparent text-sm outline-none placeholder:text-[#444]" />
        <svg viewBox="0 0 48 24" className="h-6 w-12 shrink-0">
          <path d="M4 14C0 8 6 1 13 2c6-1 8 2 6 5-2 4-9 9-12 12-2 1-4-1-3-5z" fill="#e8b467" />
          <path d="M8 12c0-5 4-8 8-7 2 3-3 8-7 11z" fill="#f5d08f" />
          <path d="M6 15c4-1 8-5 10-9M8 19c3 1 8-3 9-8M10 13l9 6M13 15l6 8M15 14l5-1M19 18v5" fill="none" stroke="#d9405f" strokeWidth="2" />
          <path d="M30 2c4-2 11-2 14 0l-2 15H31z" fill="#5f5080" /><path d="M30 12h13v4H31z" fill="#2e2745" />
          <path d="M26 15c2 2 18 3 22 0 0 5-5 7-11 7s-11-2-11-7z" fill="#7a6a9c" />
        </svg>
      </div>
      {taskApps.map(app => (
        <button
          key={app.name}
          aria-label={app.name}
          className={`relative flex h-10 w-10 items-center justify-center rounded ${app.mark === 'active' ? 'bg-[#e4f6ee]' : app.mark === 'alert' ? 'bg-[#e8adaa]' : ''}`}
        >
          {app.icon}
          {app.mark === 'dot' && <span className="absolute -bottom-px h-[3px] w-1.5 rounded-full bg-[#6d8579]" />}
          {app.mark === 'active' && <span className="absolute bottom-0 h-[3px] w-4 rounded-full bg-[#0078d4]" />}
          {app.mark === 'alert' && <span className="absolute bottom-0 h-[3px] w-8 rounded-full bg-[#c42b1c]" />}
        </button>
      ))}
    </div>

    <div className="flex items-center justify-end pr-[18px]">
      <ChevronUp className="w-4 h-4" strokeWidth={1.8} />
      <svg viewBox="0 0 18 18" className="ml-[15px] h-[18px] w-[18px]" fill="none" stroke="currentColor" strokeWidth="1.300">
        <path d="M1.500 9a7 7 0 0 1 13-4M15.500 1.500v4h-4M7 16.500L2.500 12.500M2.500 16.500v-4.500h4.500" />
        <circle cx="13" cy="13" r="4.300" fill="#0078d4" stroke="none" />
      </svg>
      <span className="ml-[15px] text-sm">中</span>
      <span className="ml-6 text-sm">拼</span>
      <svg viewBox="0 0 18 18" className="ml-[22px] h-[18px] w-[18px]" fill="none" stroke="currentColor" strokeWidth="1.200">
        <path d="M11 2H3a1.500 1.500 0 0 0-1.500 1.500v8A1.500 1.500 0 0 0 3 13h11M8 13v3M4.500 16.300h7M13 2.500h3.500v4H13zM14.700 7v10" />
      </svg>
      <svg viewBox="0 0 18 16" className="ml-1.5 h-4 w-[18px]" fill="none" stroke="currentColor" strokeWidth="1.200">
        <path d="M1 6v4h2.500L7 13V3L3.500 6zM9.500 5.500c1 1.500 1 3.500 0 5M12 4c2 2.500 2 5.500 0 8M14.500 2.500c3 3.500 3 7.500 0 11" />
      </svg>
      <div className="ml-3.5 text-right text-xs leading-4"><p>13:37</p><p>2025/12/16</p></div>
    </div>
  </div>
);

const App: React.FC = () => (
  <div className="flex min-h-screen flex-col bg-[#f4f4f5]">
    <BrowserChrome />
    <div className="mx-[3px] mb-[3px] flex-1 overflow-hidden rounded-lg border-x border-b border-[#dcdcdf] bg-white font-['Open_Sans','Noto_Sans_CJK_SC',sans-serif] text-[#1f2937]">
      <Header />
      <main>
        <Summary />
        <Filters />
        <ReservationTable />
      </main>
      <Footer />
    </div>
    <Taskbar />
  </div>
);

export default App;
